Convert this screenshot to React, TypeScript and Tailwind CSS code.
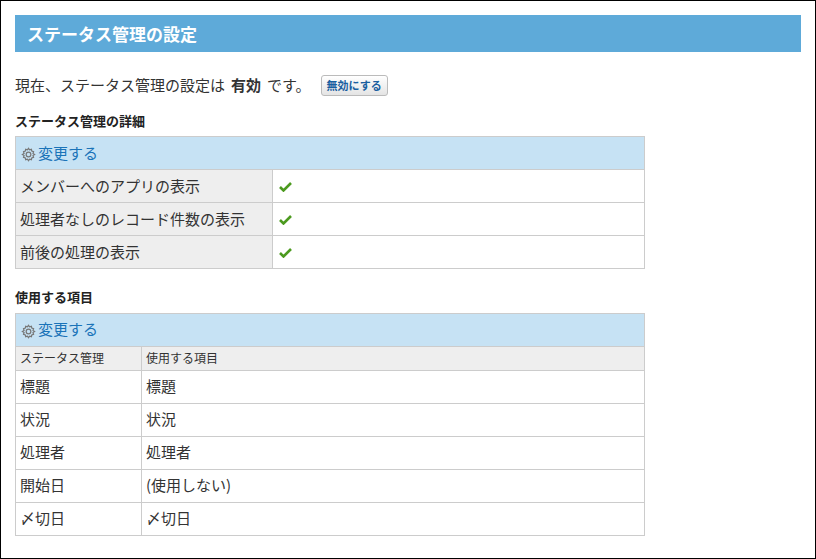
const font = { fontFamily: '"Noto Sans CJK JP", "Noto Sans", sans-serif' }

function Gear() {
  return (
    <svg width="15" height="15" viewBox="0 0 16 16" className="mr-[2px] mt-[3px]">
      <g fill="none" stroke="#777" strokeWidth="1.3">
        <path d="M8 1.5l1.2 1.6 1.9-.6.4 1.9 1.9.6-.6 1.9L14.5 8l-1.7 1.1.6 1.9-1.9.6-.4 1.9-1.9-.6L8 14.5l-1.1-1.6-1.9.6-.4-1.9-1.9-.6.6-1.9L1.5 8l1.8-1.1-.6-1.9 1.9-.6.4-1.9 1.9.6z" />
        <circle cx="8" cy="8" r="2.5" />
      </g>
    </svg>
  )
}

function Check() {
  return (
    <svg width="13" height="11" viewBox="0 0 13 11">
      <path d="M1 6l3.5 3.5L12 2" fill="none" stroke="#4c9a1f" strokeWidth="2.6" />
    </svg>
  )
}

function Change() {
  return (
    <div className="h-[33px] bg-[#c6e2f4] border-b border-[#cccccc] flex items-center px-[5px] text-[15px] text-[#1a73b8]">
      <Gear />
      <span>変更する</span>
    </div>
  )
}

export default function App() {
  const details = ['メンバーへのアプリの表示', '処理者なしのレコード件数の表示', '前後の処理の表示']
  const items = [
    ['標題', '標題'],
    ['状況', '状況'],
    ['処理者', '処理者'],
    ['開始日', '(使用しない)'],
    ['〆切日', '〆切日'],
  ]
  return (
    <div style={font} className="w-[816px] h-[559px] border border-black bg-white text-[#333] px-[14px] pt-[14px]">
      <div className="h-[37px] bg-[#5eaad9] text-white font-bold text-[17px] flex items-center px-[12px]">
        ステータス管理の設定
      </div>
      <div className="mt-[22px] flex items-center text-[15px]">
        <span>現在、ステータス管理の設定は</span>
        <span className="font-bold mx-[6px]">有効</span>
        <span>です。</span>
        <button className="ml-[10px] h-[21px] px-[5px] text-[11px] font-bold text-[#1a5fa0] bg-gradient-to-b from-white to-[#e4e4e4] border border-[#bbb] rounded-[3px]">
          無効にする
        </button>
      </div>
      <div className="mt-[14px] text-[13px] font-bold text-[#222]">ステータス管理の詳細</div>
      <div className="mt-[6px] w-[630px] border border-[#cccccc] border-b-0">
        <Change />
        {details.map((d) => (
          <div key={d} className="h-[33px] flex border-b border-[#cccccc] text-[15px]">
            <div className="w-[257px] bg-[#eeeeee] border-r border-[#cccccc] flex items-center px-[4px]">{d}</div>
            <div className="flex-1 flex items-center px-[6px]"><Check /></div>
          </div>
        ))}
      </div>
      <div className="mt-[18px] text-[13px] font-bold text-[#222]">使用する項目</div>
      <div className="mt-[6px] w-[630px] border border-[#cccccc] border-b-0">
        <Change />
        <div className="h-[24px] flex bg-[#eeeeee] border-b border-[#cccccc] text-[12px]">
          <div className="w-[126px] border-r border-[#cccccc] flex items-center px-[4px]">ステータス管理</div>
          <div className="flex-1 flex items-center px-[4px]">使用する項目</div>
        </div>
        {items.map(([a, b]) => (
          <div key={a} className="h-[33px] flex border-b border-[#cccccc] text-[15px]">
            <div className="w-[126px] border-r border-[#cccccc] flex items-center px-[4px]">{a}</div>
            <div className="flex-1 flex items-center px-[4px]">{b}</div>
          </div>
        ))}
      </div>
    </div>
  )
}
